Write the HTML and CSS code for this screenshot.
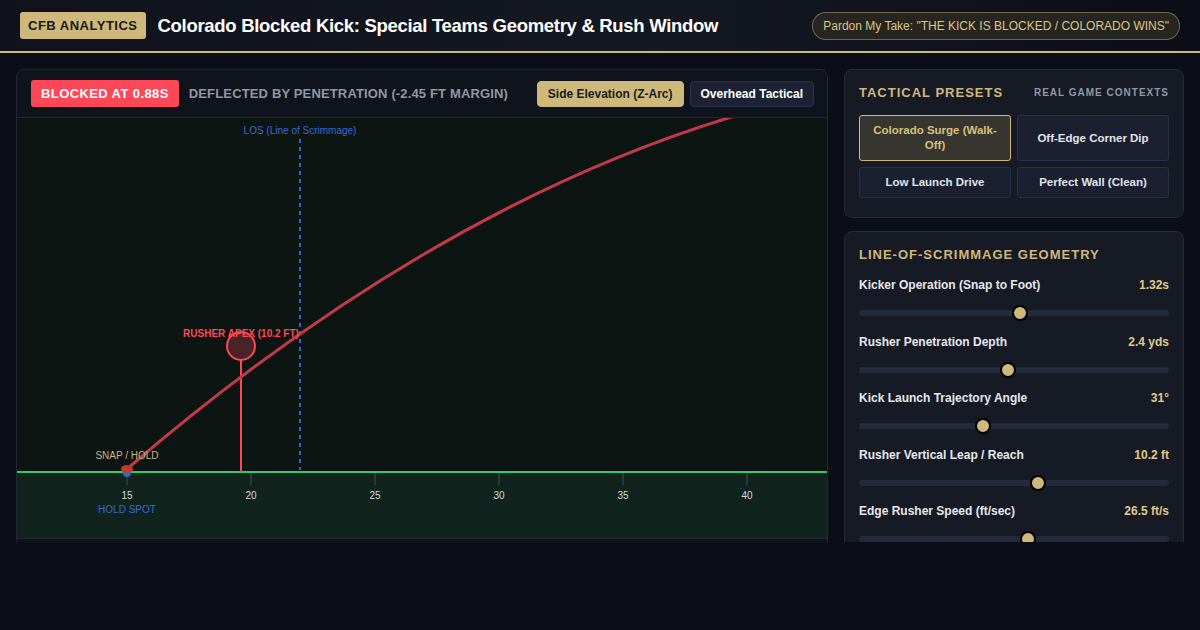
FILE: index.html
```html
<!DOCTYPE html>
<html lang="en">

<head>
    <meta charset="UTF-8">
    <title>Colorado Blocked Kick</title>
    <link rel="stylesheet" href="styles.css">
</head>

<body>
    <div class="topbar">
        <div class="brand">
            <span class="brandTag">CFB ANALYTICS</span>
            <h1>Colorado Blocked Kick: Special Teams Geometry &amp; Rush Window</h1>
        </div>
        <span class="quote">Pardon My Take: "THE KICK IS BLOCKED / COLORADO WINS"</span>
    </div>

    <div class="layout">
        <div class="stage">
            <div class="stageHead">
                <span class="status">BLOCKED AT 0.88S</span>
                <span class="verdict">DEFLECTED BY PENETRATION (-2.45 FT MARGIN)</span>
                <div class="views">
                    <button class="viewBtn active">Side Elevation (Z-Arc)</button>
                    <button class="viewBtn">Overhead Tactical</button>
                </div>
            </div>

            <!-- side view, drawn in page coordinates -->
            <svg class="field" viewBox="17 118 810 420" width="810" height="420">
                <rect x="17" y="118" width="810" height="354" fill="#0c1512"/>
                <rect x="17" y="472" width="810" height="66" fill="#11231d"/>

                <g stroke="#2a3b35" stroke-width="2">
                    <line x1="127" y1="473" x2="127" y2="485"/>
                    <line x1="251" y1="473" x2="251" y2="485"/>
                    <line x1="375" y1="473" x2="375" y2="485"/>
                    <line x1="499" y1="473" x2="499" y2="485"/>
                    <line x1="623" y1="473" x2="623" y2="485"/>
                    <line x1="747" y1="473" x2="747" y2="485"/>
                </g>
                <g class="yard" text-anchor="middle">
                    <text x="127" y="499">15</text>
                    <text x="251" y="499">20</text>
                    <text x="375" y="499">25</text>
                    <text x="499" y="499">30</text>
                    <text x="623" y="499">35</text>
                    <text x="747" y="499">40</text>
                </g>

                <line x1="300" y1="139" x2="300" y2="470" stroke="#2f63d6" stroke-width="2" stroke-dasharray="4 4"/>
                <text class="losLabel" x="300" y="134" text-anchor="middle">LOS (Line of Scrimmage)</text>

                <line x1="17" y1="472" x2="827" y2="472" stroke="#2ecc71" stroke-width="2"/>

                <line x1="241" y1="360" x2="241" y2="472" stroke="#ff4757" stroke-width="2"/>
                <circle cx="241" cy="346" r="14" fill="#4a2329" stroke="#ff4757" stroke-width="2"/>

                <path d="M127 469 Q477 168 827 92" fill="none" stroke="#c23a48" stroke-width="3"/>

                <text class="apexLabel" x="241" y="337" text-anchor="middle">RUSHER APEX (10.2 FT)</text>

                <circle cx="127" cy="473" r="4" fill="#3567d2"/>
                <ellipse cx="127" cy="469" rx="6" ry="4" fill="#c0392b"/>
                <text class="snapLabel" x="127" y="459" text-anchor="middle">SNAP / HOLD</text>
                <text class="holdLabel" x="127" y="513" text-anchor="middle">HOLD SPOT</text>
            </svg>

            <div class="stageFoot"></div>
        </div>

        <div class="side">
            <div class="card">
                <div class="cardHead">
                    <h2>TACTICAL PRESETS</h2>
                    <span class="cardNote">REAL GAME CONTEXTS</span>
                </div>
                <div class="presets">
                    <button class="preset active">Colorado Surge (Walk-Off)</button>
                    <button class="preset">Off-Edge Corner Dip</button>
                    <button class="preset">Low Launch Drive</button>
                    <button class="preset">Perfect Wall (Clean)</button>
                </div>
            </div>

            <div class="card">
                <h2>LINE-OF-SCRIMMAGE GEOMETRY</h2>

                <div class="control">
                    <div class="controlHead"><span>Kicker Operation (Snap to Foot)</span><b>1.32s</b></div>
                    <input type="range" min="0.8" max="1.8" step="0.01" value="1.32">
                </div>
                <div class="control">
                    <div class="controlHead"><span>Rusher Penetration Depth</span><b>2.4 yds</b></div>
                    <input type="range" min="0" max="5" step="0.1" value="2.4">
                </div>
                <div class="control">
                    <div class="controlHead"><span>Kick Launch Trajectory Angle</span><b>31°</b></div>
                    <input type="range" min="20" max="48" step="1" value="31">
                </div>
                <div class="control">
                    <div class="controlHead"><span>Rusher Vertical Leap / Reach</span><b>10.2 ft</b></div>
                    <input type="range" min="7" max="12.5" step="0.1" value="10.2">
                </div>
                <div class="control">
                    <div class="controlHead"><span>Edge Rusher Speed (ft/sec)</span><b>26.5 ft/s</b></div>
                    <input type="range" min="15" max="36" step="0.5" value="26.5">
                </div>
            </div>
        </div>
    </div>
</body>
</html>
```

FILE: styles.css
```css
body {
    margin: 0;
    height: 630px;
    overflow: hidden;
    background: #0b0e16;
    color: #e6e8ee;
    font-family: "Liberation Sans", Arial, sans-serif;
}

button {
    font-family: inherit;
    cursor: pointer;
}

.topbar {
    height: 51px;
    padding: 0 20px;
    display: flex;
    align-items: center;
    justify-content: space-between;
    background: linear-gradient(90deg, #0f121a, #141822 55%, #0b0e16);
    border-bottom: 2px solid #cfb87c;
}

.brand {
    display: flex;
    align-items: center;
    gap: 12px;
}

.brandTag {
    background: #cfb87c;
    color: #171717;
    font-size: 13px;
    font-weight: bold;
    letter-spacing: 0.5px;
    padding: 6px 8px;
    border-radius: 3px;
}

.brand h1 {
    margin: 0;
    font-size: 18.5px;
    color: #fff;
    letter-spacing: -0.3px;
}

.quote {
    font-size: 12px;
    color: #dcc689;
    background: #26251f;
    border: 1px solid rgba(207, 184, 124, 0.45);
    border-radius: 14px;
    padding: 6px 10px;
}

/* the work area is cut off above the fold */
.layout {
    height: 473px;
    padding: 16px 16px 0;
    display: grid;
    grid-template-columns: 1fr 340px;
    align-items: start;
    gap: 16px;
    overflow: hidden;
}

.stage {
    background: #0f131b;
    border: 1px solid #232838;
    border-radius: 8px;
}

.stageHead {
    height: 47px;
    padding: 0 13px 0 14px;
    display: flex;
    align-items: center;
    border-bottom: 1px solid #232838;
}

.status {
    background: #ff4757;
    color: #fff;
    font-size: 13px;
    font-weight: bold;
    letter-spacing: 0.4px;
    padding: 6px 10px;
    border-radius: 3px;
}

.verdict {
    margin-left: 10px;
    color: #8f98a3;
    font-size: 13px;
    font-weight: bold;
    letter-spacing: 0.15px;
}

.views {
    margin-left: auto;
    display: flex;
    gap: 6px;
}

.viewBtn {
    height: 26px;
    padding: 0 10px;
    font-size: 12px;
    font-weight: bold;
    color: #fff;
    background: #1c2233;
    border: 1px solid #2b3350;
    border-radius: 4px;
}

.viewBtn.active {
    background: #cfb87c;
    color: #1a1a1a;
    border-color: #cfb87c;
}

.field {
    display: block;
    font-family: "Liberation Sans", Arial, sans-serif;
}

.yard {
    font-size: 10px;
    fill: #d6d9dd;
}

.losLabel {
    font-size: 10px;
    fill: #3a6ad4;
}

.apexLabel {
    font-size: 10px;
    font-weight: bold;
    fill: #ff4757;
}

.snapLabel {
    font-size: 10px;
    fill: #c9b47c;
}

.holdLabel {
    font-size: 10px;
    fill: #3a6ad4;
}

.stageFoot {
    height: 40px;
    border-top: 1px solid #232838;
}

.side {
    display: flex;
    flex-direction: column;
    gap: 13px;
}

.card {
    background: #161a24;
    border: 1px solid #262b3a;
    border-radius: 8px;
    padding: 15px 14px 19px;
}

.card h2 {
    margin: 0;
    font-size: 13px;
    color: #cfb87c;
    letter-spacing: 1px;
}

.cardHead {
    display: flex;
    justify-content: space-between;
    align-items: center;
    margin-bottom: 15px;
}

.cardNote {
    font-size: 10px;
    font-weight: bold;
    color: #8f98a3;
    letter-spacing: 1px;
}

.presets {
    display: grid;
    grid-template-columns: 1fr 1fr;
    gap: 6px;
}

.preset {
    padding: 7px 10px;
    font-size: 11.5px;
    line-height: 15px;
    font-weight: bold;
    color: #e1e4ea;
    background: #1a2030;
    border: 1px solid #28304a;
    border-radius: 3px;
}

.preset.active {
    background: #37352f;
    border-color: #cfb87c;
    color: #d9c07c;
}

.control {
    margin-top: 16px;
}

.controlHead {
    display: flex;
    justify-content: space-between;
    font-size: 12px;
    font-weight: bold;
    color: #e6e8ee;
}

.controlHead b {
    color: #e0c98a;
}

.control input {
    -webkit-appearance: none;
    appearance: none;
    display: block;
    width: 100%;
    height: 6px;
    margin: 18px 0 18.5px;
    background: #232a3b;
    border-radius: 3px;
    outline: none;
}

.control input::-webkit-slider-thumb {
    -webkit-appearance: none;
    width: 16px;
    height: 16px;
    border-radius: 50%;
    background: #cfb87c;
    border: 2px solid #000;
    box-sizing: border-box;
}
```
